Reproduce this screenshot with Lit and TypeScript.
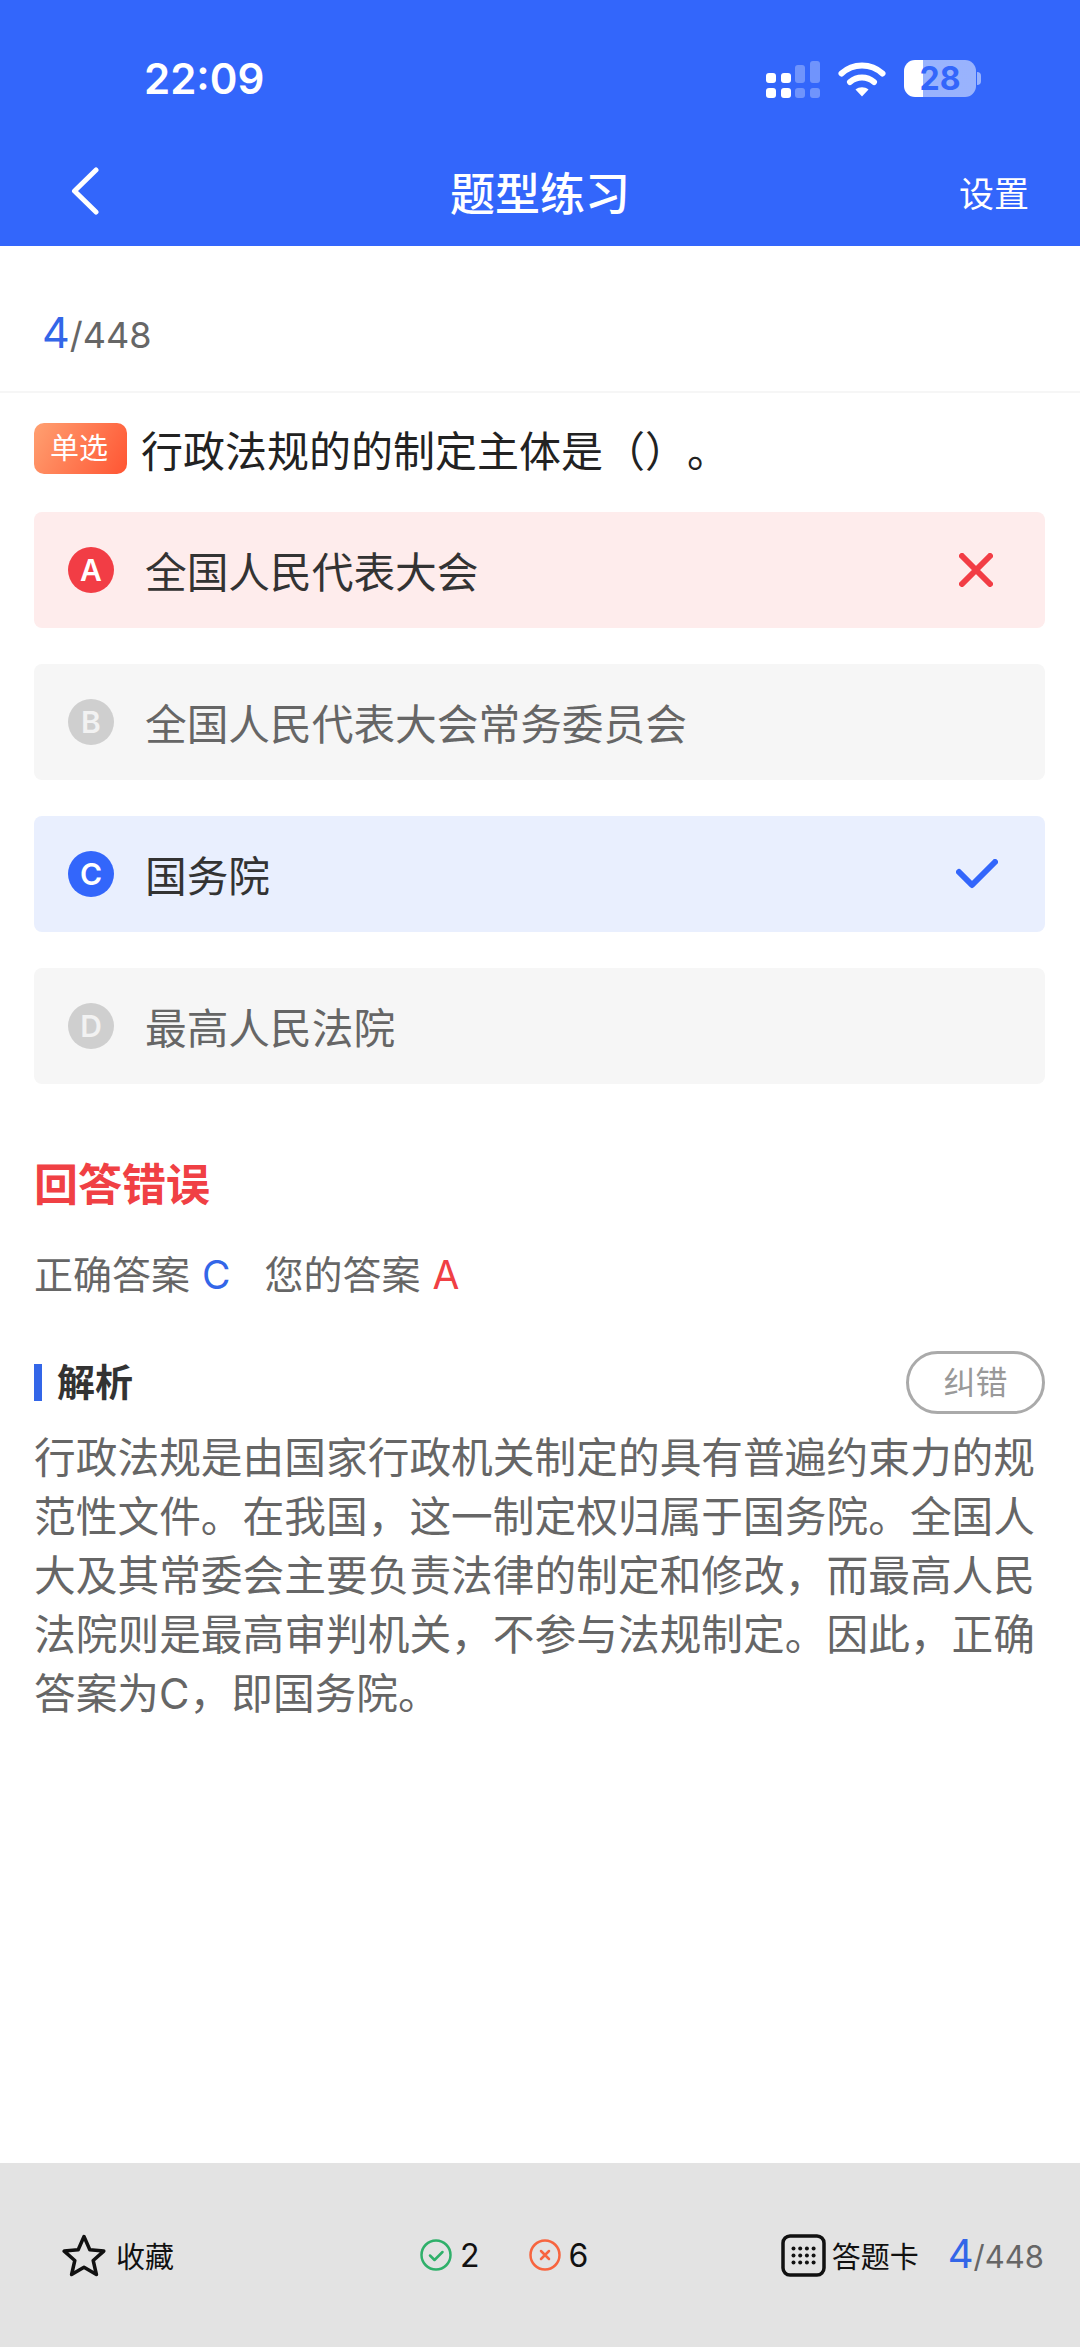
import { LitElement, html, css, svg } from 'lit';
import { customElement } from 'lit/decorators.js';
import { classMap } from 'lit/directives/class-map.js';

const options = [
  { key: 'A', text: '全国人民代表大会', state: 'wrong' },
  { key: 'B', text: '全国人民代表大会常务委员会', state: '' },
  { key: 'C', text: '国务院', state: 'right' },
  { key: 'D', text: '最高人民法院', state: '' },
];

const signal = svg`
  <svg width="54" height="37" viewBox="0 0 54 37" fill="#fff">
    <rect x="0" y="12" width="10" height="10" rx="3"/>
    <rect x="15" y="12" width="10" height="10" rx="3"/>
    <rect x="29" y="4" width="10" height="18" rx="3" opacity=".3"/>
    <rect x="44" y="0" width="10" height="22" rx="3" opacity=".3"/>
    <rect x="0" y="27" width="10" height="10" rx="3"/>
    <rect x="15" y="27" width="10" height="10" rx="3"/>
    <rect x="29" y="27" width="10" height="10" rx="3" opacity=".3"/>
    <rect x="44" y="27" width="10" height="10" rx="3" opacity=".3"/>
  </svg>`;

const wifi = svg`
  <svg width="48" height="35" viewBox="0 0 48 35" fill="none" stroke="#fff" stroke-width="6" stroke-linecap="round">
    <path d="M3.5 11.5C15 .8 33 .8 44.5 11.5"/>
    <path d="M12 20c7-6 17-6 24 0"/>
    <path d="M17.5 27.5c3.8-3 9.2-3 13 0L24 34.5z" fill="#fff" stroke="none"/>
  </svg>`;

@customElement('app-root')
export class AppRoot extends LitElement {
  static styles = css`
    :host {
      display: flex;
      flex-direction: column;
      min-height: 2347px;
      background: #fff;
      font-family: Inter, "Noto Sans CJK SC", sans-serif;
      color: #333;
      text-spacing-trim: space-all;
    }
    .top {
      height: 246px;
      box-sizing: border-box;
      background: #3366fb;
      color: #fff;
      display: flex;
      flex-direction: column;
    }
    .status {
      height: 158px;
      box-sizing: border-box;
      padding: 60px 104px 0 144px;
      display: flex;
      align-items: flex-start;
    }
    .time {
      font-size: 42px;
      font-weight: 600;
      line-height: 38px;
      flex: 1;
    }
    .signal { margin-top: 1px; }
    .wifi { margin-left: 18px; margin-top: 2px; }
    .battery {
      margin-left: 18px;
      width: 72px;
      height: 37px;
      border-radius: 11px;
      background: linear-gradient(90deg, #fff 27%, rgba(255, 255, 255, 0.5) 27%);
      color: #3366fb;
      font-size: 32px;
      font-weight: 700;
      line-height: 37px;
      text-align: center;
      position: relative;
    }
    .battery::after {
      content: '';
      position: absolute;
      right: -5px;
      top: 12px;
      width: 4px;
      height: 13px;
      border-radius: 0 4px 4px 0;
      background: rgba(255, 255, 255, 0.5);
    }
    .nav {
      position: relative;
      display: flex;
      align-items: center;
      justify-content: space-between;
      height: 66px;
      padding: 0 51px 0 70px;
    }
    .title {
      position: absolute;
      left: 0;
      right: 0;
      text-align: center;
      font-size: 45px;
      font-weight: 500;
      pointer-events: none;
    }
    .setting { font-size: 35px; }
    .count {
      height: 147px;
      box-sizing: border-box;
      border-bottom: 2px solid #f6f6f6;
      padding: 56px 0 0 42px;
      display: flex;
      align-items: baseline;
      color: #666;
    }
    .num { font-size: 43px; color: #3366e8; line-height: 60px; }
    .slash { font-size: 36px; line-height: 60px; }
    main {
      flex: 1;
      padding: 30px 35px 0 34px;
    }
    .question {
      display: flex;
      align-items: center;
      height: 51px;
      font-size: 42px;
      color: #222;
    }
    .tag {
      width: 93px;
      height: 51px;
      box-sizing: border-box;
      padding-right: 3px;
      border-radius: 10px;
      margin-right: 14px;
      background: linear-gradient(120deg, #ffa071, #ff5533);
      color: #fff;
      font-size: 29px;
      line-height: 51px;
      text-align: center;
    }
    .options {
      margin-top: 38px;
      display: flex;
      flex-direction: column;
      gap: 36px;
    }
    .option {
      display: flex;
      align-items: center;
      height: 116px;
      box-sizing: border-box;
      padding: 0 44px 0 34px;
      border-radius: 8px;
      background: #f6f6f6;
      color: #666;
      font-size: 41.7px;
    }
    .option.wrong { background: #feecec; color: #333; }
    .option.right { background: #e9effe; color: #333; }
    .letter {
      width: 46px;
      height: 46px;
      border-radius: 50%;
      background: #cfcfcf;
      color: #f2f2f2;
      font-size: 30px;
      font-weight: 600;
      line-height: 46px;
      text-align: center;
      margin-right: 31px;
    }
    .wrong .letter { background: #f23d45; color: #fff; }
    .right .letter { background: #3366fb; color: #fff; }
    .opt-text { flex: 1; }
    .mark-x { margin-right: 8px; }
    .mark-check { margin-right: 3px; }
    .verdict {
      margin-top: 71px;
      font-size: 44px;
      font-weight: 700;
      line-height: 60px;
      color: #f04044;
    }
    .answers {
      margin-top: 35px;
      display: flex;
      font-size: 39px;
      line-height: 50px;
      color: #666;
    }
    .answers span { margin-left: 12px; }
    .answers .blue { color: #3366e8; margin-right: 34px; }
    .answers .red { color: #f04044; }
    .head {
      margin-top: 51px;
      display: flex;
      align-items: center;
      justify-content: space-between;
      height: 63px;
    }
    .label {
      border-left: 8px solid #3366e8;
      padding-left: 15px;
      height: 37px;
      line-height: 37px;
      font-size: 38px;
      font-weight: 700;
    }
    .report {
      width: 139px;
      height: 63px;
      box-sizing: border-box;
      border: 3px solid #aaa;
      border-radius: 32px;
      color: #999;
      font-size: 32px;
      line-height: 57px;
      text-align: center;
    }
    .analysis {
      margin: 15px 0 0;
      width: 1001px;
      font-size: 41.7px;
      line-height: 59px;
      color: #666;
      text-align: justify;
    }
    .bar {
      height: 184px;
      background: #e3e3e3;
      display: flex;
      align-items: center;
      padding: 0 36px 0 62px;
      color: #111;
    }
    .group { display: flex; align-items: center; }
    .fav { font-size: 29px; margin-left: 10px; }
    .stats { margin-left: 246px; font-size: 32px; }
    .stats b { font-weight: 400; margin: 0 49px 0 8px; }
    .stats b:last-child { margin-right: 0; }
    .card { margin-left: auto; }
    .card-label { font-size: 29px; margin: 0 29px 0 6px; }
    .card .num { font-size: 40px; }
    .card .slash { font-size: 31px; color: #666; }
    .pager { display: flex; align-items: baseline; }
  `;

  render() {
    return html`
      <div class="top">
        <div class="status">
          <div class="time">22:09</div>
          <span class="signal">${signal}</span>
          <span class="wifi">${wifi}</span>
          <div class="battery">28</div>
        </div>
        <div class="nav">
          <svg width="30" height="48" viewBox="0 0 30 48" fill="none" stroke="#fff" stroke-width="5" stroke-linecap="round" stroke-linejoin="round">
            <path d="M26 3L4.500 24 26 45"/>
          </svg>
          <div class="title">题型练习</div>
          <div class="setting">设置</div>
        </div>
      </div>
      <div class="count">
        <span class="num">4</span><span class="slash">/448</span>
      </div>
      <main>
        <div class="question">
          <span class="tag">单选</span>
          <span>行政法规的的制定主体是（）。</span>
        </div>
        <div class="options">
          ${options.map(
            (o) => html`
              <div class=${classMap({ option: true, wrong: o.state === 'wrong', right: o.state === 'right' })}>
                <span class="letter">${o.key}</span>
                <span class="opt-text">${o.text}</span>
                ${o.state === 'wrong'
                  ? html`<svg class="mark-x" width="34" height="34" viewBox="0 0 34 34" fill="none" stroke="#f23d45" stroke-width="6" stroke-linecap="round"><path d="M3 3l28 28M31 3L3 31"/></svg>`
                  : ''}
                ${o.state === 'right'
                  ? html`<svg class="mark-check" width="42" height="30" viewBox="0 0 42 30" fill="none" stroke="#3366fb" stroke-width="6" stroke-linecap="round" stroke-linejoin="round"><path d="M3 13l13 13L39 3"/></svg>`
                  : ''}
              </div>
            `
          )}
        </div>
        <div class="verdict">回答错误</div>
        <div class="answers">
          正确答案<span class="blue">C</span>您的答案<span class="red">A</span>
        </div>
        <div class="head">
          <div class="label">解析</div>
          <div class="report">纠错</div>
        </div>
        <p class="analysis">行政法规是由国家行政机关制定的具有普遍约束力的规范性文件。在我国，这一制定权归属于国务院。全国人大及其常委会主要负责法律的制定和修改，而最高人民法院则是最高审判机关，不参与法规制定。因此，正确答案为C，即国务院。</p>
      </main>
      <div class="bar">
        <div class="group">
          <svg width="44" height="43" viewBox="0 0 44 43" fill="none" stroke="#111" stroke-width="3.5" stroke-linejoin="round">
            <path d="M22 2.500l5.800 13.200 14 1.400-10.600 9.400 3.200 14L22 33.200 9.600 40.500l3.200-14L2.200 17.100l14-1.400z"/>
          </svg>
          <span class="fav">收藏</span>
        </div>
        <div class="group stats">
          <svg width="32" height="32" viewBox="0 0 32 32" fill="none" stroke="#2fb06a" stroke-width="2.500" stroke-linecap="round" stroke-linejoin="round">
            <circle cx="16" cy="16" r="14.500"/><path d="M10 16.500l4.500 4.500 8-8"/>
          </svg>
          <b>2</b>
          <svg width="32" height="32" viewBox="0 0 32 32" fill="none" stroke="#f7653f" stroke-width="2.500" stroke-linecap="round">
            <circle cx="16" cy="16" r="14.500"/><path d="M12 12l8 8M20 12l-8 8"/>
          </svg>
          <b>6</b>
        </div>
        <div class="group card">
          <svg width="45" height="43" viewBox="0 0 45 43" fill="#111">
            <rect x="2" y="2" width="41" height="39" rx="7" fill="none" stroke="#111" stroke-width="3.500"/>
            ${[0, 1, 2].map((r) =>
              [0, 1, 2, 3].map(
                (c) => svg`<circle cx=${12.5 + c * 6.7} cy=${14.5 + r * 7} r="2"/>`
              )
            )}
          </svg>
          <span class="card-label">答题卡</span>
          <div class="pager"><span class="num">4</span><span class="slash">/448</span></div>
        </div>
      </div>
    `;
  }
}
